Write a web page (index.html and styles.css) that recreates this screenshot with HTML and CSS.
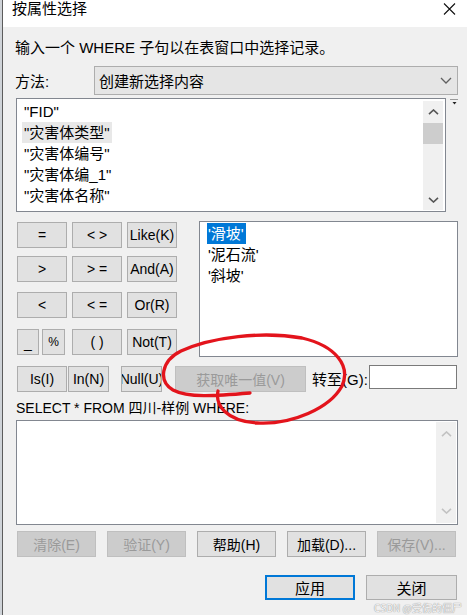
FILE: index.html
```html
<!DOCTYPE html>
<html lang="zh-CN">
    <head>
        <meta charset="UTF-8" />
        <title>按属性选择</title>
        <link rel="stylesheet" href="styles.css">
    </head>
    <body>
        <div class="window">
            <!-- 标题栏 -->
            <div class="titlebar">
                <span class="title">按属性选择</span>
                <svg class="close" width="13" height="12" viewBox="0 0 13 12">
                    <path d="M1 0.5 L12 11.5 M12 0.5 L1 11.5" stroke="#111" stroke-width="1.1" fill="none" />
                </svg>
            </div>

            <div class="content">
                <p class="hint">输入一个 WHERE 子句以在表窗口中选择记录。</p>

                <!-- 方法 -->
                <div class="method-row">
                    <span class="method-label">方法:</span>
                    <div class="combo">
                        <span>创建新选择内容</span>
                        <svg width="12" height="7" viewBox="0 0 12 7">
                            <path d="M1 1 L6 6 L11 1" stroke="#606060" stroke-width="1.3" fill="none" />
                        </svg>
                    </div>
                </div>

                <!-- 字段列表 -->
                <div class="fields-row">
                    <div class="listbox fields">
                        <ul class="items">
                            <li>"FID"</li>
                            <li><span class="hover">"灾害体类型"</span></li>
                            <li>"灾害体编号"</li>
                            <li>"灾害体编_1"</li>
                            <li>"灾害体名称"</li>
                        </ul>
                        <div class="vscroll">
                            <div class="arrow">
                                <svg width="11" height="6" viewBox="0 0 11 6"><path d="M1 5.2 L5.5 1 L10 5.2" stroke="#555" stroke-width="1.6" fill="none" /></svg>
                            </div>
                            <div class="thumb"></div>
                            <div class="track"></div>
                            <div class="arrow">
                                <svg width="11" height="6" viewBox="0 0 11 6"><path d="M1 0.8 L5.5 5 L10 0.8" stroke="#555" stroke-width="1.6" fill="none" /></svg>
                            </div>
                        </div>
                    </div>
                    <svg class="mini-menu" width="8" height="7" viewBox="0 0 8 7">
                        <path d="M0 0.5 H8" stroke="#9a9a9a" stroke-width="1" />
                        <path d="M2.5 3 H6.5 L4.5 5.5 Z" fill="#222" />
                    </svg>
                </div>

                <!-- 运算符 / 唯一值 -->
                <div class="middle">
                    <div class="ops">
                        <div class="op-row">
                            <button class="btn">=</button>
                            <button class="btn">&lt; &gt;</button>
                            <button class="btn">Like(K)</button>
                        </div>
                        <div class="op-row">
                            <button class="btn">&gt;</button>
                            <button class="btn">&gt; =</button>
                            <button class="btn">And(A)</button>
                        </div>
                        <div class="op-row">
                            <button class="btn">&lt;</button>
                            <button class="btn">&lt; =</button>
                            <button class="btn">Or(R)</button>
                        </div>
                        <div class="op-row">
                            <div class="pair">
                                <button class="btn small">_</button>
                                <button class="btn small pct">%</button>
                            </div>
                            <button class="btn">( )</button>
                            <button class="btn">Not(T)</button>
                        </div>
                    </div>
                    <div class="listbox values">
                        <ul class="items">
                            <li><span class="selected">'滑坡'</span></li>
                            <li>'泥石流'</li>
                            <li>'斜坡'</li>
                        </ul>
                    </div>
                </div>

                <div class="action-row">
                    <button class="btn is">Is(I)</button>
                    <button class="btn in">In(N)</button>
                    <button class="btn null">Null(U)</button>
                    <button class="btn unique disabled">获取唯一值(V)</button>
                    <span class="goto-label">转至(G):</span>
                    <div class="goto-input"></div>
                </div>

                <p class="sql-label">SELECT * FROM 四川-样例 WHERE:</p>
                <div class="sql-box">
                    <div class="sql-text"></div>
                    <div class="vscroll off">
                        <div class="arrow">
                            <svg width="11" height="6" viewBox="0 0 11 6"><path d="M1 5.2 L5.5 1 L10 5.2" stroke="#c2c2c2" stroke-width="1.6" fill="none" /></svg>
                        </div>
                        <div class="track"></div>
                        <div class="arrow">
                            <svg width="11" height="6" viewBox="0 0 11 6"><path d="M1 0.8 L5.5 5 L10 0.8" stroke="#c2c2c2" stroke-width="1.6" fill="none" /></svg>
                        </div>
                    </div>
                </div>

                <div class="btn-row">
                    <button class="btn wide disabled">清除(E)</button>
                    <button class="btn wide disabled">验证(Y)</button>
                    <button class="btn wide">帮助(H)</button>
                    <button class="btn wide">加载(D)...</button>
                    <button class="btn wide disabled">保存(V)...</button>
                </div>

                <div class="footer">
                    <button class="btn apply">应用</button>
                    <button class="btn close-btn">关闭</button>
                </div>
            </div>
        </div>

        <!-- 红色圈注 -->
        <svg class="annotation" width="467" height="615" viewBox="0 0 467 615">
            <path d="M218 391 C215 405 226 421 257 423 C292 425 330 408 342 386 C351 366 336 346 302 338 C262 331 212 337 181 351 C161 361 158 381 173 390 C188 398 215 396 250 393"
                stroke="#e3141c" stroke-width="3.3" fill="none" stroke-linecap="round" stroke-linejoin="round" />
        </svg>

        <span class="watermark">CSDN @受伤的僵尸</span>
    </body>
</html>
```

FILE: styles.css
```css
* {
    box-sizing: border-box;
}

body {
    margin: 0;
    width: 467px;
    height: 615px;
    position: relative;
    overflow: hidden;
    background: #cfd3d8;
    font-family: "Liberation Sans", "Noto Sans CJK SC", sans-serif;
    font-size: 14px;
    color: #000;
}

.window {
    margin-left: 2px;
    height: 615px;
    border-left: 1px solid #5c5c5c;
    background: #f0f0f0;
}

/* 标题栏 */
.titlebar {
    height: 27px;
    background: #fff;
    display: flex;
    justify-content: space-between;
    align-items: flex-start;
    padding: 0 11px 0 9px;
}

.title {
    font-size: 15px;
    line-height: 17px;
}

.close {
    margin-top: 3px;
}

.content {
    padding: 0 9px 0 13px;
}

.hint {
    margin: 11px 0 0 -1px;
    font-size: 15px;
    line-height: 20px;
}

/* 方法 */
.method-row {
    display: flex;
    align-items: center;
    margin-top: 8px;
    height: 29px;
}

.method-label {
    width: 79px;
    margin-left: -1px;
    font-size: 15px;
}

.combo {
    flex: 1;
    height: 29px;
    display: flex;
    align-items: center;
    justify-content: space-between;
    padding: 0 5px 0 4px;
    background: #e5e5e5;
    border: 1px solid #adadad;
    font-size: 15px;
}

/* 列表框 */
.listbox {
    background: #fff;
    border: 1px solid #828790;
}

.items {
    list-style: none;
    margin: 0;
    padding: 0;
    flex: 1;
}

.items li {
    height: 21px;
    line-height: 21px;
    font-size: 15px;
    white-space: nowrap;
}

.fields-row {
    display: flex;
    align-items: flex-start;
    margin-top: 3px;
}

.fields {
    width: 430px;
    height: 114px;
    display: flex;
    padding: 2px 2px 1px 0;
}

.fields .items {
    padding-left: 7px;
}

.hover {
    display: inline-block;
    background: #e8e8e8;
    padding: 0 2px;
    margin-left: -2px;
}

.vscroll {
    width: 20px;
    display: flex;
    flex-direction: column;
    background: #f0f0f0;
}

.vscroll .arrow {
    height: 21px;
    display: flex;
    align-items: center;
    justify-content: center;
}

.vscroll .thumb {
    height: 21px;
    margin-top: 1px;
    background: #cdcdcd;
}

.vscroll .track {
    flex: 1;
}

.mini-menu {
    margin: 1px 0 0 4px;
}

/* 运算符按钮 */
.middle {
    display: flex;
    justify-content: space-between;
    margin-top: 9px;
    height: 136px;
}

.ops {
    padding: 1px 0 0 1px;
}

.op-row {
    display: grid;
    grid-template-columns: 50px 50px 50px;
    column-gap: 5px;
    margin-top: 10px;
}

.op-row:first-child {
    margin-top: 0;
}

.op-row:nth-child(2) {
    margin-top: 8px;
}

.op-row:nth-child(4) {
    margin-top: 11px;
}

.btn {
    height: 26px;
    padding: 0;
    display: flex;
    align-items: center;
    justify-content: center;
    overflow: hidden;
    white-space: nowrap;
    background: #e1e1e1;
    border: 1px solid #adadad;
    font-family: "Liberation Sans", "Noto Sans CJK SC", sans-serif;
    font-size: 14px;
    color: #000;
}

.btn.disabled {
    background: #cccccc;
    border-color: #bfbfbf;
    color: #9a9a9a;
}

.pair {
    display: flex;
    gap: 3px;
}

.btn.small {
    width: 22px;
    align-items: flex-end;
    padding-bottom: 3px;
}

.btn.small.pct {
    width: 23px;
    align-items: center;
    padding-bottom: 0;
    font-size: 12px;
}

.values {
    width: 259px;
    height: 136px;
    padding: 1px 0 0 7px;
}

.selected {
    display: inline-block;
    background: #0078d7;
    color: #fff;
    padding: 0 2px 0 1px;
}

.values .items li:nth-child(n+2) {
    padding-left: 1px;
}

/* 第五行 */
.action-row {
    display: flex;
    align-items: flex-start;
    margin-top: 8px;
    height: 27px;
    padding-left: 1px;
}

.action-row .btn {
    margin-top: 1px;
}

.btn.is {
    width: 50px;
}

.btn.in {
    width: 41px;
    margin-left: 1px;
}

.btn.null {
    width: 41px;
    margin-left: 12px;
}

.btn.unique {
    width: 131px;
    margin-left: 13px;
}

.goto-label {
    margin: 6px 0 0 6px;
    width: 57px;
    font-size: 15px;
    line-height: 17px;
}

.goto-input {
    width: 88px;
    height: 24px;
    background: #fff;
    border: 1px solid #7a7a7a;
}

/* SQL */
.sql-label {
    margin: 7px 0 0 0;
    font-size: 14px;
    line-height: 18px;
}

.sql-box {
    margin-top: 3px;
    height: 105px;
    display: flex;
    background: #fff;
    border: 1px solid #828790;
    padding: 1px 1px 1px 0;
}

.sql-text {
    flex: 1;
}

.vscroll.off .arrow {
    height: 24px;
}

/* 底部按钮 */
.btn-row {
    display: flex;
    gap: 11px;
    margin-top: 6px;
    padding-left: 1px;
}

.btn.wide {
    width: 79px;
}

.footer {
    display: flex;
    justify-content: flex-end;
    gap: 11px;
    margin-top: 18px;
    padding-right: 1px;
}

.btn.apply {
    width: 90px;
    height: 25px;
    border: 2px solid #0078d7;
    font-size: 15px;
}

.btn.close-btn {
    width: 91px;
    height: 25px;
    font-size: 15px;
}

.annotation {
    position: absolute;
    left: 0;
    top: 0;
}

.watermark {
    position: absolute;
    right: 5px;
    bottom: 1px;
    font-family: "Noto Sans CJK SC", sans-serif;
    font-size: 10px;
    line-height: 12px;
    color: #f7f7f7;
    text-shadow: 0 0 1px #9a9a9a, 0 0 1px #9a9a9a;
}
```
